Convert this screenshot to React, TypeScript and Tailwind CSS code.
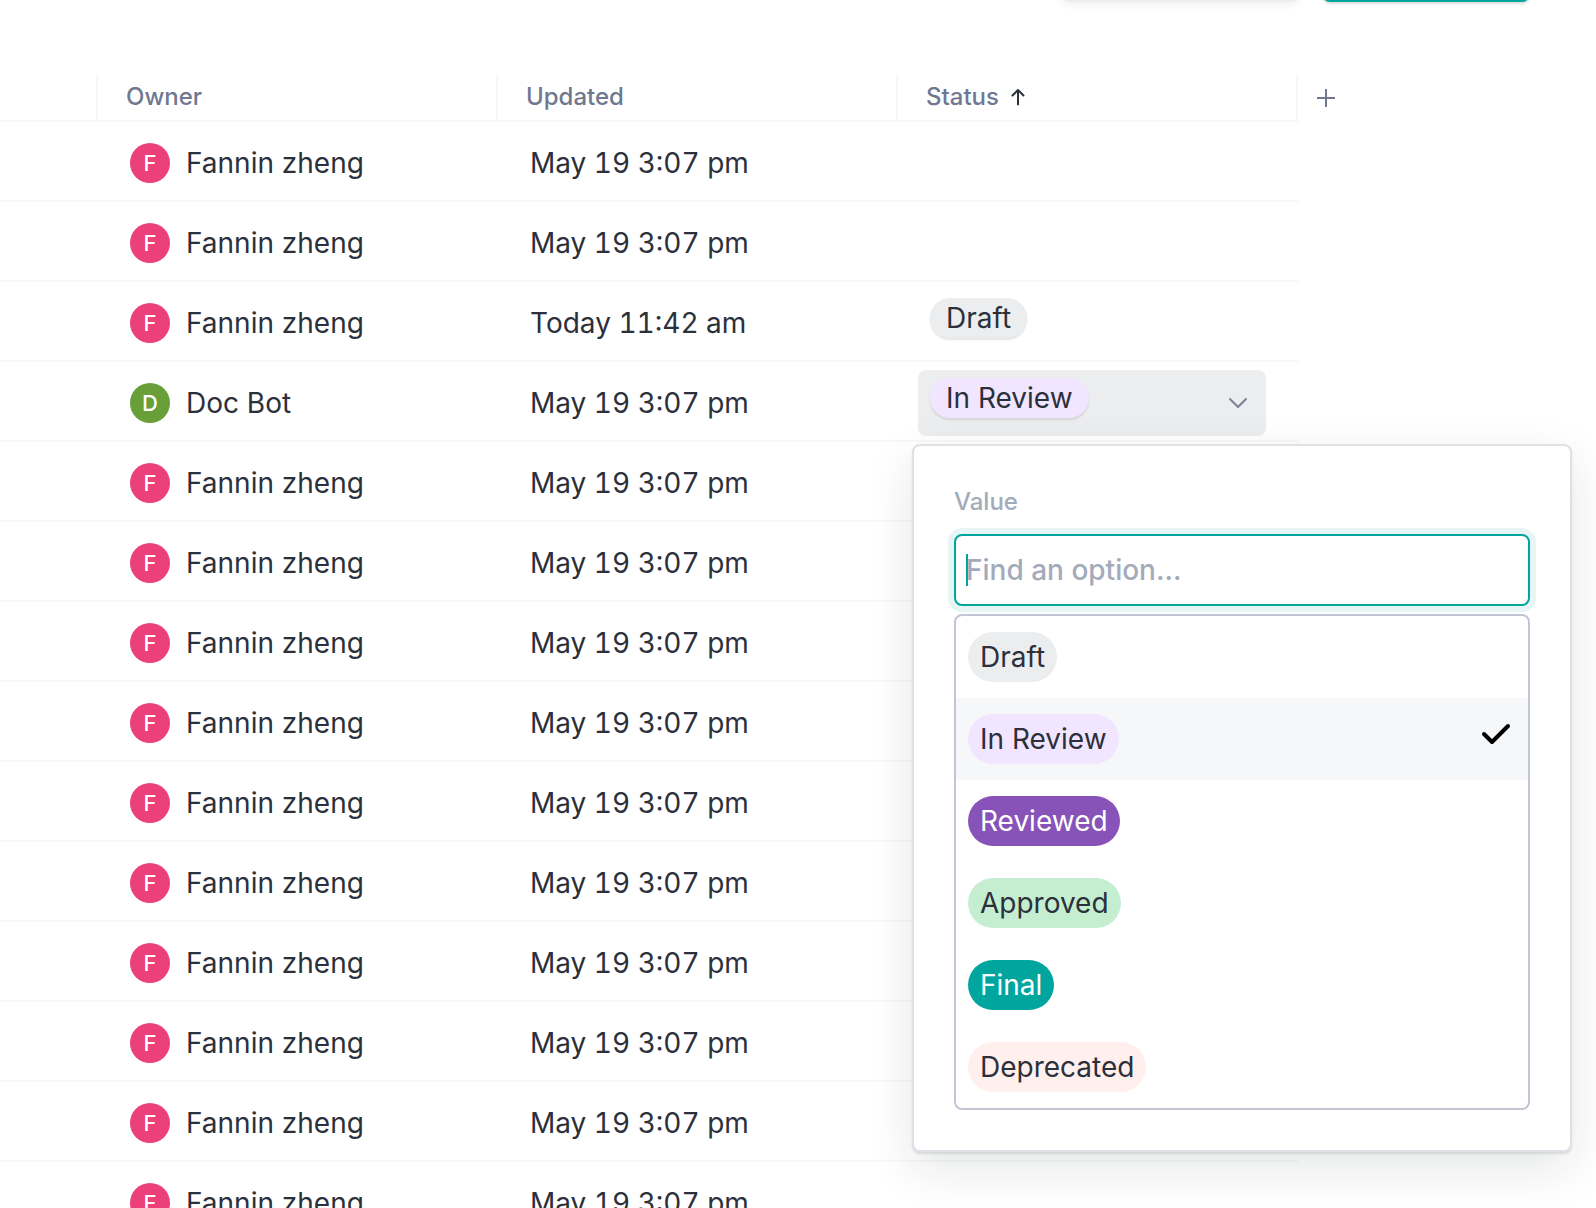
import { useState } from "react";

type Status = "Draft" | "In Review" | "Reviewed" | "Approved" | "Final" | "Deprecated";

type Row = { owner: string; updated: string; status?: Status };

const STATUSES: Status[] = ["Draft", "In Review", "Reviewed", "Approved", "Final", "Deprecated"];

const STATUS_COLORS: Record<Status, string> = {
  Draft: "bg-[#ecedef] text-[#2b303b]",
  "In Review": "bg-[#f2e5ff] text-[#2b303b]",
  Reviewed: "bg-[#8753b8] text-white",
  Approved: "bg-[#c5eed1] text-[#2b303b]",
  Final: "bg-[#00a59d] text-white",
  Deprecated: "bg-[#fff0ee] text-[#2b303b]",
};

const fannin: Row = { owner: "Fannin zheng", updated: "May 19 3:07 pm" };

const ROWS: Row[] = [
  fannin,
  fannin,
  { owner: "Fannin zheng", updated: "Today 11:42 am", status: "Draft" },
  { owner: "Doc Bot", updated: "May 19 3:07 pm", status: "In Review" },
  ...Array.from({ length: 10 }, () => fannin),
];

function Avatar({ name }: { name: string }) {
  const color = name === "Doc Bot" ? "bg-[#689f38]" : "bg-[#ec407a]";
  return (
    <span
      className={`flex size-10 shrink-0 items-center justify-center rounded-full text-[22px] leading-none font-medium text-white ${color}`}
    >
      {name[0]}
    </span>
  );
}

function CellChip({ status }: { status: Status }) {
  return (
    <span
      className={`flex h-10 w-fit items-center rounded-full px-4 text-[28px] whitespace-nowrap shadow-[0_2px_2px_rgba(30,40,50,0.12)] ${STATUS_COLORS[status]}`}
    >
      {status}
    </span>
  );
}

function StatusMenu({ value, onPick }: { value: Status; onPick: (s: Status) => void }) {
  const [query, setQuery] = useState("");
  const options = STATUSES.filter((s) => s.toLowerCase().includes(query.toLowerCase()));
  return (
    <div className="absolute top-full -left-1.5 z-10 mt-2 w-[660px] rounded-lg border-2 border-[#dfe1e7] bg-white p-10 shadow-[0_2px_2px_rgba(30,40,50,0.12),0_16px_48px_rgba(10,30,20,0.11)]">
      <label htmlFor="status-value" className="block text-2xl font-medium text-[#a3abba]">
        Value
      </label>
      <div className="relative mt-4">
        <input
          id="status-value"
          type="text"
          value={query}
          onChange={(e) => setQuery(e.target.value)}
          placeholder="Find an option..."
          className="block h-18 w-full rounded-lg border-2 border-[#00a59d] bg-white px-2.5 text-[28px] font-medium text-[#2b303b] caret-[#00a59d] ring-6 ring-[#e7f5f4] outline-none placeholder:text-[#a3abba]"
        />
        {query === "" && <span className="absolute top-5 left-3 h-8 w-0.5 bg-[#00a59d]" />}
      </div>
      <ul
        role="listbox"
        aria-label="Status options"
        className="relative mt-2 overflow-hidden rounded-lg border-2 border-[#c2c6d3] bg-white"
      >
        {options.map((s) => (
          <li key={s}>
            <button
              type="button"
              role="option"
              aria-selected={s === value}
              onClick={() => onPick(s)}
              className="flex w-full justify-between py-4 pr-4 pl-3 aria-selected:bg-[#f6f7f9]"
            >
              <span
                className={`flex h-[50px] items-center rounded-full px-3 text-[28px] whitespace-nowrap ${STATUS_COLORS[s]}`}
              >
                {s}
              </span>
              {s === value && (
                <svg viewBox="0 0 32 24" className="mt-2 h-6 w-8" fill="none" stroke="#000" strokeWidth="4" strokeLinecap="round" strokeLinejoin="round">
                  <path d="M4 12 L12 20 L28 4" />
                </svg>
              )}
            </button>
          </li>
        ))}
      </ul>
    </div>
  );
}

function StatusPicker({ initial }: { initial: Status }) {
  const [value, setValue] = useState(initial);
  return (
    <div className="relative">
      <button
        type="button"
        aria-haspopup="listbox"
        aria-expanded="true"
        className="flex h-[66px] w-full justify-between rounded-lg bg-[#ecedef] py-2 pr-4 pl-3"
      >
        <CellChip status={value} />
        <svg viewBox="0 0 24 24" className="mt-3 size-6" fill="none" stroke="#7b8296" strokeWidth="2" strokeLinecap="round" strokeLinejoin="round">
          <path d="M4 9 L12 17 L20 9" />
        </svg>
      </button>
      <StatusMenu value={value} onPick={setValue} />
    </div>
  );
}

export default function App() {
  const th = "h-12 border-r-2 border-b-2 border-[#f8f8f9] pl-7 text-left align-middle font-medium";
  const td = "h-20 border-b-2 border-[#f8f8f9]";
  return (
    <div className="h-screen w-full overflow-hidden bg-white font-['Inter',sans-serif] text-[#2b303b]">
      <header className="flex h-0.5 items-end justify-end gap-[22px] pr-[66px]">
        <button
          type="button"
          aria-label="Share"
          className="h-16 w-[238px] rounded-lg bg-[#ecedef] shadow-[0_2px_8px_rgba(30,40,50,0.08)]"
        />
        <button
          type="button"
          aria-label="Create"
          className="h-16 w-[208px] rounded-lg bg-[#00a59d] shadow-[0_2px_2px_rgba(30,40,50,0.15)]"
        />
      </header>
      <table className="mt-18 w-full table-fixed border-separate border-spacing-0">
        <colgroup>
          <col className="w-[98px]" />
          <col className="w-[400px]" />
          <col className="w-[400px]" />
          <col className="w-[400px]" />
          <col />
        </colgroup>
        <thead className="text-2xl text-[#6f7890]">
          <tr>
            <td className="h-12 border-r-2 border-b-2 border-[#f8f8f9]" />
            <th scope="col" className={th}>Owner</th>
            <th scope="col" className={th}>Updated</th>
            <th scope="col" className={th} aria-sort="ascending">
              <span className="flex items-center gap-2.5">
                Status
                <svg viewBox="0 0 18 20" className="h-5 w-[18px]" fill="none" stroke="#2b303b" strokeWidth="2" strokeLinecap="round" strokeLinejoin="round">
                  <path d="M9 17.5 V3 M3.5 8.5 L9 3 L14.5 8.5" />
                </svg>
              </span>
            </th>
            <td className="pl-4 align-middle">
              <button type="button" aria-label="Add column" className="flex size-6 items-center justify-center">
                <svg viewBox="0 0 24 24" className="size-6" fill="none" stroke="#6f7890" strokeWidth="2">
                  <path d="M12 3 V21 M3 12 H21" />
                </svg>
              </button>
            </td>
          </tr>
        </thead>
        <tbody className="text-[28px]">
          {ROWS.map((row, i) => (
            <tr key={i}>
              <td className={td} />
              <td className={`${td} pt-1 pl-8`}>
                <div className="flex items-center gap-4 whitespace-nowrap">
                  <Avatar name={row.owner} />
                  {row.owner}
                </div>
              </td>
              <td className={`${td} pt-1 pl-8 whitespace-nowrap tabular-nums`}>{row.updated}</td>
              {row.status === "In Review" ? (
                <td className={`${td} pt-2 pr-8 pl-5 align-top`}>
                  <StatusPicker initial={row.status} />
                </td>
              ) : (
                <td className={`${td} pt-4 pl-8 align-top`}>
                  {row.status && <CellChip status={row.status} />}
                </td>
              )}
              <td />
            </tr>
          ))}
        </tbody>
      </table>
    </div>
  );
}
